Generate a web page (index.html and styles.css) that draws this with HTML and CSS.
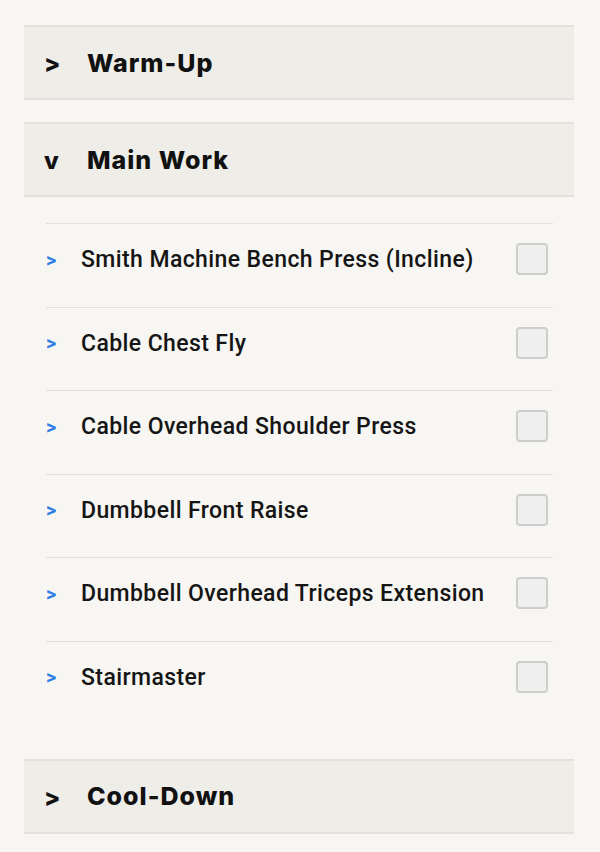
FILE: index.html
```html
<!DOCTYPE html>
<html lang="en">
<head>
<meta charset="utf-8">
<title>Workout</title>
<link rel="stylesheet" href="styles.css">
</head>
<body>
<div class="page">
  <section class="block">
    <div class="block-head"><span class="head-icon">&gt;</span><span class="head-title">Warm-Up</span></div>
  </section>
  <section class="block open">
    <div class="block-head"><span class="head-icon">v</span><span class="head-title">Main Work</span></div>
    <ul class="items">
      <li class="item"><span class="item-icon">&gt;</span><span class="item-name">Smith Machine Bench Press (Incline)</span><span class="check"></span></li>
      <li class="item"><span class="item-icon">&gt;</span><span class="item-name">Cable Chest Fly</span><span class="check"></span></li>
      <li class="item"><span class="item-icon">&gt;</span><span class="item-name">Cable Overhead Shoulder Press</span><span class="check"></span></li>
      <li class="item"><span class="item-icon">&gt;</span><span class="item-name">Dumbbell Front Raise</span><span class="check"></span></li>
      <li class="item"><span class="item-icon">&gt;</span><span class="item-name">Dumbbell Overhead Triceps Extension</span><span class="check"></span></li>
      <li class="item"><span class="item-icon">&gt;</span><span class="item-name">Stairmaster</span><span class="check"></span></li>
    </ul>
  </section>
  <section class="block">
    <div class="block-head"><span class="head-icon">&gt;</span><span class="head-title">Cool-Down</span></div>
  </section>
</div>
</body>
</html>
```
FILE: styles.css
```css
html, body {
  margin: 0;
  padding: 0;
  background: #f7f6f2;
}
.page {
  padding: 25px 26px 0 24px;
  display: flex;
  flex-direction: column;
  gap: 22px;
}
.block-head {
  height: 71px;
  display: flex;
  align-items: center;
  background: #eeede8;
  border-top: 2px solid #e3e1dc;
  border-bottom: 2px solid #e3e1dc;
  padding-left: 20px;
  color: #111;
  font-family: "Inter", sans-serif;
  font-weight: 800;
}
.head-icon {
  width: 43px;
  font-size: 24px;
  padding-top: 2px;
}
.head-title {
  font-size: 25px;
  letter-spacing: 1px;
}
.items {
  list-style: none;
  margin: 26px 21px 0 22px;
  padding: 0 0 12px 0;
}
.item {
  display: flex;
  align-items: center;
  border-top: 1px solid #e2e0db;
  padding: 19px 5px 31.6px 0;
  font-family: "Roboto", sans-serif;
}
.item-icon {
  width: 35px;
  color: #2f7fe6;
  font-size: 20px;
  font-weight: 700;
  padding-top: 1px;
}
.item-name {
  flex: 1;
  font-size: 23px;
  font-weight: 500;
  letter-spacing: 0.4px;
  color: #151515;
  padding-top: 1px;
}
.check {
  width: 28px;
  height: 28px;
  border: 2px solid #cdcdcb;
  border-radius: 4px;
  background: #efefef;
}
```
